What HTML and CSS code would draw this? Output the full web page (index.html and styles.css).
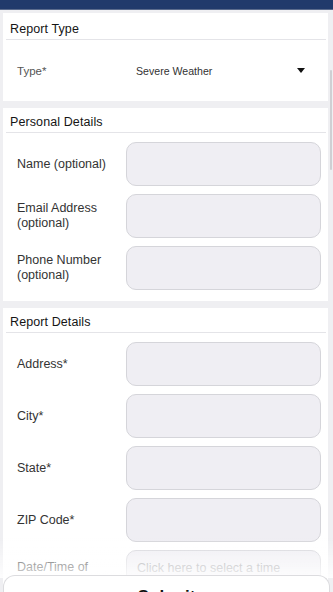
FILE: index.html
```html
<!DOCTYPE html>
<html>
<head>
<meta charset="utf-8">
<link rel="stylesheet" href="styles.css">
</head>
<body>
<div class="topbar"></div>
<main class="page">
  <section class="card">
    <div class="card-head card-head-first">Report Type</div>
    <div class="type-row">
      <span class="type-label">Type*</span>
      <span class="type-value">Severe Weather</span>
      <svg class="caret" width="8" height="5" viewBox="0 0 8 5"><path d="M0 0 H8 L4 5 Z" fill="#111"/></svg>
    </div>
  </section>

  <section class="card">
    <div class="card-head">Personal Details</div>
    <div class="card-body">
      <div class="row"><span class="label">Name (optional)</span><div class="input"></div></div>
      <div class="row"><span class="label">Email Address<br>(optional)</span><div class="input"></div></div>
      <div class="row"><span class="label">Phone Number<br>(optional)</span><div class="input"></div></div>
    </div>
  </section>

  <section class="card">
    <div class="card-head">Report Details</div>
    <div class="card-body">
      <div class="row"><span class="label">Address*</span><div class="input"></div></div>
      <div class="row"><span class="label">City*</span><div class="input"></div></div>
      <div class="row"><span class="label">State*</span><div class="input"></div></div>
      <div class="row"><span class="label">ZIP Code*</span><div class="input"></div></div>
      <div class="row row-top"><span class="label">Date/Time of<br>Incident*</span><div class="input input-ph">Click here to select a time</div></div>
      <div class="row"><span class="label">Description*</span><div class="input"></div></div>
    </div>
  </section>
</main>
<div class="scroll-thumb"></div>
<div class="fade"></div>
<div class="submit-bar"><span class="submit-text">Submit</span></div>
</body>
</html>
```

FILE: styles.css
```css
html, body {
  margin: 0;
  padding: 0;
  height: 592px;
  overflow: hidden;
}
body {
  background: #efeff2;
  font-family: "Liberation Sans", Arial, sans-serif;
  color: #333;
}
.topbar {
  height: 9px;
  background: #213a6b;
  border-bottom: 1px solid #5b6b8c;
}
.page {
  display: flex;
  flex-direction: column;
  gap: 7px;
  padding: 3px 5px 0 3px;
}
.card {
  background: #fff;
}
.card-head {
  height: 20px;
  margin: 0 2px 0 3px;
  padding: 4px 0 0 4px;
  box-sizing: content-box;
  display: flex;
  align-items: center;
  border-bottom: 1px solid #e4e4e8;
  font-size: 12.5px;
  color: #151515;
  letter-spacing: 0.1px;
}
.card-head-first {
  padding-top: 5px;
  height: 21px;
}
.type-row {
  height: 61px;
  display: flex;
  align-items: center;
  padding-left: 14px;
}
.type-label {
  width: 119px;
  font-size: 11.5px;
  color: #555;
}
.type-value {
  flex: 1;
  font-size: 10.6px;
  color: #333;
}
.caret {
  margin-right: 23px;
  margin-top: -1px;
}
.card-body {
  display: flex;
  flex-direction: column;
  gap: 8px;
  padding: 9px 7px 11px 14px;
}
.row {
  display: grid;
  grid-template-columns: 109px 195px;
  align-items: center;
}
.row-top {
  align-items: start;
}
.row-top .label {
  padding-top: 10px;
}
.label {
  font-size: 12.5px;
  line-height: 15px;
  color: #333;
}
.input {
  height: 42px;
  border: 1px solid #d5d5da;
  border-radius: 10px;
  background: #efeef3;
  box-sizing: content-box;
}
.input-ph {
  font-size: 12.5px;
  color: #9a9a9e;
  padding: 10px 0 0 10px;
  height: 32px;
}
.scroll-thumb {
  position: absolute;
  left: 330px;
  top: 70px;
  width: 2px;
  height: 100px;
  background: #cfcfd3;
  border-radius: 1px;
}
.fade {
  position: fixed;
  left: 0;
  right: 0;
  top: 538px;
  height: 40px;
  background: linear-gradient(to bottom, rgba(255,255,255,0), rgba(255,255,255,0.85));
}
.submit-bar {
  position: fixed;
  left: 3px;
  right: 3px;
  top: 575px;
  height: 40px;
  background: #fff;
  border: 1px solid #dcdcdf;
  border-bottom: none;
  border-radius: 12px 12px 0 0;
  display: flex;
  justify-content: center;
  padding-top: 11px;
  box-sizing: border-box;
}
.submit-text {
  font-size: 17px;
  font-weight: bold;
  color: #111;
  line-height: 20px;
}
```
